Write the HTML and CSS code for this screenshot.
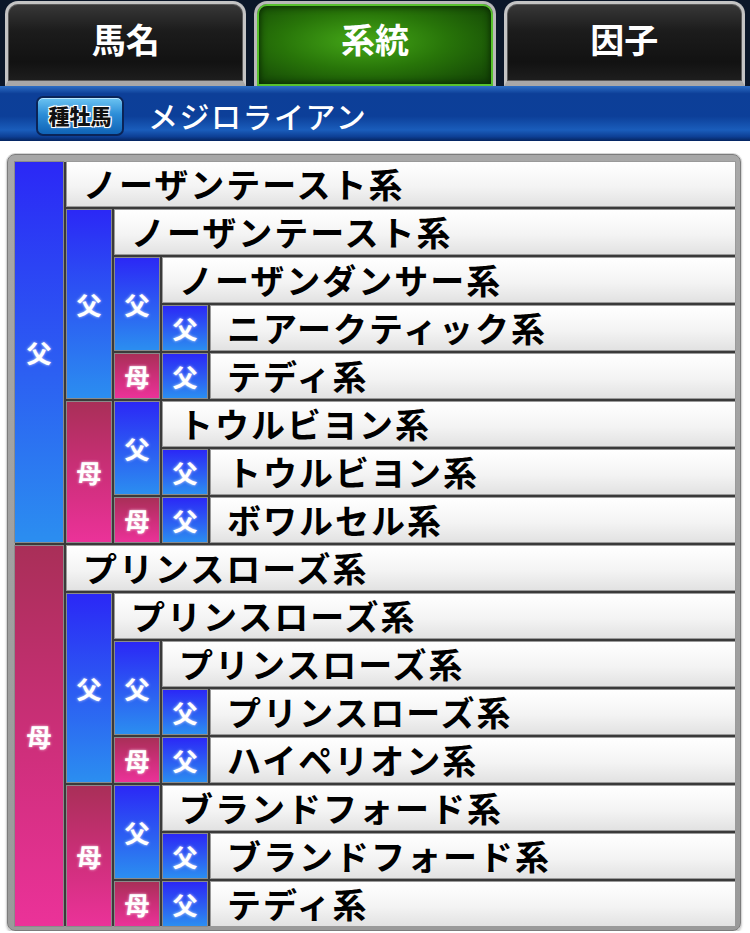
FILE: index.html
```html
<!DOCTYPE html>
<html lang="ja">
<head>
    <meta charset="UTF-8">
    <meta name="viewport" content="width=device-width, initial-scale=1.0">
    <title>系統</title>
    <link rel="stylesheet" href="styles.css">
</head>
<body>

<div class="tabs">
    <div class="tab">馬名</div>
    <div class="tab active">系統</div>
    <div class="tab">因子</div>
</div>

<div class="horse-bar">
    <span class="badge">種牡馬</span>
    <span class="horse-name">メジロライアン</span>
</div>

<div class="panel">
    <div class="tree">
        <!-- 父 -->
        <div class="node">
            <div class="tag sire lv1">父</div>
            <div class="kids">
                <div class="line">ノーザンテースト系</div>
                <div class="node">
                    <div class="tag sire">父</div>
                    <div class="kids">
                        <div class="line">ノーザンテースト系</div>
                        <div class="node">
                            <div class="tag sire">父</div>
                            <div class="kids">
                                <div class="line">ノーザンダンサー系</div>
                                <div class="node"><div class="tag sire">父</div><div class="line">ニアークティック系</div></div>
                            </div>
                        </div>
                        <div class="node">
                            <div class="tag dam">母</div>
                            <div class="kids">
                                <div class="node"><div class="tag sire">父</div><div class="line">テディ系</div></div>
                            </div>
                        </div>
                    </div>
                </div>
                <div class="node">
                    <div class="tag dam">母</div>
                    <div class="kids">
                        <div class="node">
                            <div class="tag sire">父</div>
                            <div class="kids">
                                <div class="line">トウルビヨン系</div>
                                <div class="node"><div class="tag sire">父</div><div class="line">トウルビヨン系</div></div>
                            </div>
                        </div>
                        <div class="node">
                            <div class="tag dam">母</div>
                            <div class="kids">
                                <div class="node"><div class="tag sire">父</div><div class="line">ボワルセル系</div></div>
                            </div>
                        </div>
                    </div>
                </div>
            </div>
        </div>

        <!-- 母 -->
        <div class="node">
            <div class="tag dam lv1">母</div>
            <div class="kids">
                <div class="line">プリンスローズ系</div>
                <div class="node">
                    <div class="tag sire">父</div>
                    <div class="kids">
                        <div class="line">プリンスローズ系</div>
                        <div class="node">
                            <div class="tag sire">父</div>
                            <div class="kids">
                                <div class="line">プリンスローズ系</div>
                                <div class="node"><div class="tag sire">父</div><div class="line">プリンスローズ系</div></div>
                            </div>
                        </div>
                        <div class="node">
                            <div class="tag dam">母</div>
                            <div class="kids">
                                <div class="node"><div class="tag sire">父</div><div class="line">ハイペリオン系</div></div>
                            </div>
                        </div>
                    </div>
                </div>
                <div class="node">
                    <div class="tag dam">母</div>
                    <div class="kids">
                        <div class="node">
                            <div class="tag sire">父</div>
                            <div class="kids">
                                <div class="line">ブランドフォード系</div>
                                <div class="node"><div class="tag sire">父</div><div class="line">ブランドフォード系</div></div>
                            </div>
                        </div>
                        <div class="node">
                            <div class="tag dam">母</div>
                            <div class="kids">
                                <div class="node"><div class="tag sire">父</div><div class="line">テディ系</div></div>
                            </div>
                        </div>
                    </div>
                </div>
            </div>
        </div>
    </div>
</div>

</body>
</html>
```

FILE: styles.css
```css
body {
    margin: 0;
    padding: 0;
    width: 750px;
    background-color: #ffffff;
    font-family: "Noto Sans CJK JP", "Noto Sans", sans-serif;
}

/* tabs */
.tabs {
    display: flex;
    gap: 8px;
    height: 86px;
    padding: 1px 5px 0 5px;
    box-sizing: border-box;
    background-color: #0b1729;
}
.tab {
    flex: 1;
    display: flex;
    align-items: center;
    justify-content: center;
    padding-bottom: 8px;
    border: 3px solid #c4c4c4;
    border-bottom: 5px solid #a8a8a8;
    border-radius: 13px 13px 0 0;
    background: linear-gradient(#383838, #1c1c1c 35%, #121212 75%, #1e1e1e);
    box-shadow: inset 0 0 0 1px #5a5a5a;
    color: #ffffff;
    font-size: 34px;
    font-weight: 700;
    line-height: 1;
}
.tab.active {
    border-color: #b9b9b9;
    border-bottom: none;
    padding-bottom: 13px;
    background: radial-gradient(ellipse at 45% 45%, #45a818 0%, #287509 45%, #0f3a05 100%);
    box-shadow: inset 0 0 0 2px #58c22e, inset 0 0 6px 3px #0a2a03;
}

/* horse bar */
.horse-bar {
    display: flex;
    align-items: center;
    height: 55px;
    padding-left: 36px;
    background: linear-gradient(#2d6ec4 0%, #0d3f98 14%, #0c3f99 55%, #1a5dbb 80%, #0d3f95 92%, #05245f 100%);
}
.badge {
    display: flex;
    align-items: center;
    justify-content: center;
    width: 84px;
    height: 36px;
    margin-top: 4px;
    border: 2px solid #0a2458;
    border-radius: 7px;
    background: linear-gradient(#6cc4f2, #2d8ed8 45%, #0f63b6 100%);
    box-shadow: inset 0 1px 0 #b8e6ff;
    color: #111111;
    font-size: 21px;
    font-weight: 900;
    line-height: 1;
    text-shadow: 1px 1px 0 #fff, -1px -1px 0 #fff, 1px -1px 0 #fff, -1px 1px 0 #fff, 0 0 3px #fff;
}
.horse-name {
    margin-left: 24px;
    margin-top: 2px;
    color: #ffffff;
    font-size: 30px;
    font-weight: 500;
    letter-spacing: 1.5px;
    line-height: 1;
}

/* pedigree panel */
.panel {
    margin: 13px 9px 0 7px;
    padding: 7px 5px 4px 7px;
    border: 1px solid #7c7c7c;
    border-radius: 8px;
    background: linear-gradient(#a8a8a8, #9a9a9a);
    box-shadow: 0 0 0 1px #d6d6d6, 0 2px 3px rgba(0, 0, 0, 0.35);
}
.tree {
    display: flex;
    flex-direction: column;
    gap: 4px;
    background-color: #3a3a3a;
}
.node {
    display: flex;
    gap: 4px;
}
.kids {
    flex: 1;
    display: flex;
    flex-direction: column;
    gap: 4px;
}
.tag {
    flex: none;
    width: 44px;
    display: flex;
    align-items: center;
    justify-content: center;
    box-shadow: 0 0 0 1px #8a8a8a;
    color: #ffffff;
    font-size: 25px;
    font-weight: 700;
    line-height: 1;
    text-shadow: 0 0 3px rgba(255, 255, 255, 0.8);
}
.tag.lv1 {
    width: 48px;
}
.tag.sire {
    background: linear-gradient(#2b28f6, #2c5ff2 55%, #2b8ef0);
}
.tag.dam {
    background: linear-gradient(#a92f58, #cf2f7c 55%, #eb3299);
}
.line {
    flex: 1;
    height: 44px;
    display: flex;
    align-items: center;
    padding-left: 16px;
    box-shadow: 0 0 0 1px #9a9a9a;
    background: linear-gradient(#ffffff, #f4f4f4 55%, #e2e2e2);
    color: #000000;
    font-size: 34px;
    font-weight: 700;
    line-height: 1;
    letter-spacing: 2px;
    white-space: nowrap;
}
.kids > .line {
    flex: none;
}
```
